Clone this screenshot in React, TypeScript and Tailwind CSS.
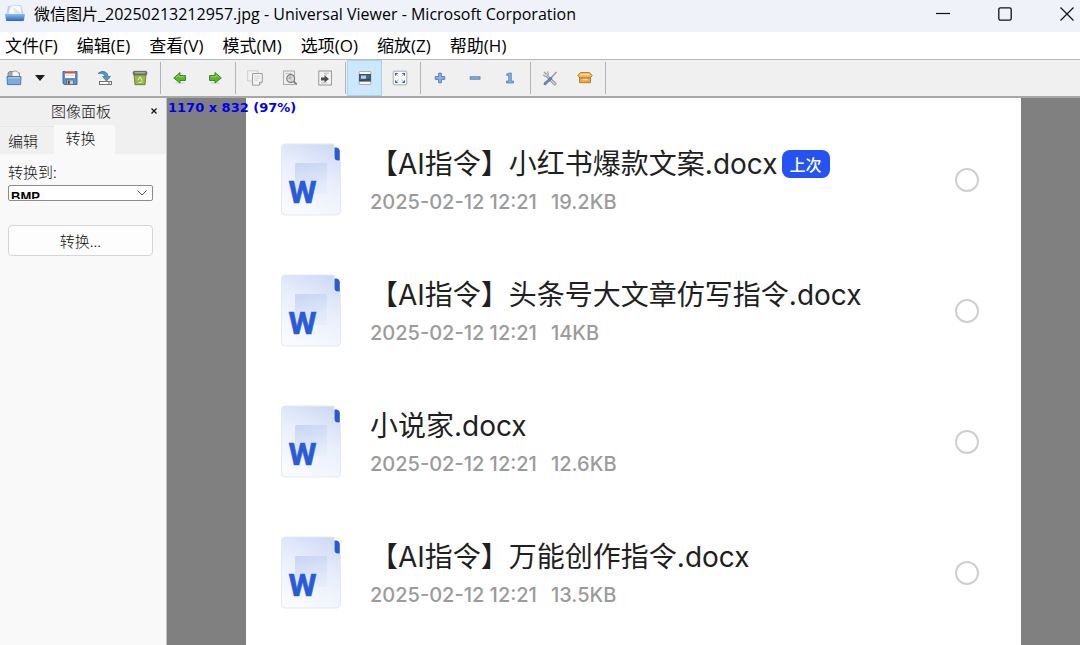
import React, { useState } from 'react';

interface DocItem {
  name: string;
  date: string;
  size: string;
  recent?: boolean;
}

const MENUS = ['文件(F)', '编辑(E)', '查看(V)', '模式(M)', '选项(O)', '缩放(Z)', '帮助(H)'];

const DOCS: DocItem[] = [
  { name: '【AI指令】小红书爆款文案.docx', date: '2025-02-12 12:21', size: '19.2KB', recent: true },
  { name: '【AI指令】头条号大文章仿写指令.docx', date: '2025-02-12 12:21', size: '14KB' },
  { name: '小说家.docx', date: '2025-02-12 12:21', size: '12.6KB' },
  { name: '【AI指令】万能创作指令.docx', date: '2025-02-12 12:21', size: '13.5KB' },
];

const Icon: React.FC<{ children: React.ReactNode }> = ({ children }) => (
  <svg viewBox="0 0 16 16" className="w-4 h-4" fill="none" aria-hidden="true">
    {children}
  </svg>
);

const AppIcon = () => (
  <svg viewBox="0 0 22 18" className="w-[22px] h-[18px]" fill="none" aria-hidden="true">
    <defs>
      <linearGradient id="tray" x1="0" y1="0" x2="0" y2="1">
        <stop offset="0" stopColor="#8fbcf0" />
        <stop offset="1" stopColor="#2866bd" />
      </linearGradient>
    </defs>
    <path d="M4 2 L17 1 L20 12 H2 Z" fill="#b5d2f3" />
    <path d="M6 3 L9 1 L17 2 L18 11 H4 Z" fill="#f7f8fa" stroke="#c9d3df" strokeWidth=".7" />
    <path d="M9 3 L16 8 L17 11 L11 11 Z" fill="#e2e6ec" />
    <path d="M1 10 H21 L20 16 Q20 17 19 17 H3 Q2 17 2 16 Z" fill="url(#tray)" />
  </svg>
);

const FolderIcon = () => (
  <Icon>
    <path d="M2 14 V3 L3.5 1.5 H7 L8 3 H13.5 V14 Z" fill="#a9a9a9" stroke="#777" strokeWidth=".8" />
    <path d="M6 7 V2 Q9 .4 11 1.2 L13.4 4 V8 Z" fill="#f6f6f6" stroke="#8a8a8a" strokeWidth=".8" />
    <path d="M1 6.5 H15 L14.6 14.6 H1.4 Z" fill="#7fabdc" stroke="#3f74b4" strokeWidth=".9" />
    <path d="M2 7.8 H14" stroke="#b7d0ed" />
  </Icon>
);

const SaveIcon = () => (
  <Icon>
    <path d="M1 1.5 H15 V14.5 H2.2 L1 13.3 Z" fill="#5f8fce" stroke="#3c619b" strokeWidth=".9" />
    <rect x="3" y="1.5" width="10" height="6.5" fill="#fafafa" />
    <rect x="3" y="1.5" width="10" height="2" fill="#dd4b3c" />
    <path d="M4 5.3 H12" stroke="#ccc" strokeWidth=".7" />
    <rect x="4.5" y="10" width="7" height="4.5" fill="#c9cbd0" stroke="#555d6b" strokeWidth=".7" />
    <rect x="5.8" y="10.8" width="2" height="3" fill="#39465c" />
  </Icon>
);

const ExportIcon = () => (
  <Icon>
    <path d="M1 3.5 Q4.5 0 8.5 2 Q11 3.5 11 6.5 H13.5 L9.5 11 L5.5 6.5 H8 Q7.8 4 5 3.5 Q3 3.2 1 3.5Z" fill="#4d9cc4" stroke="#2d7195" strokeWidth=".7" />
    <rect x="2.5" y="11.5" width="12" height="3" fill="#fff" stroke="#666" strokeWidth=".9" />
    <path d="M12 12 V14" stroke="#666" />
  </Icon>
);

const TrashIcon = () => (
  <Icon>
    <path d="M2 4.5 H14 L13 14.7 H3 Z" fill="#9cb74a" stroke="#5c6d31" strokeWidth=".8" />
    <rect x="1.2" y="1.3" width="13.6" height="3.6" rx="1" fill="#74786a" stroke="#55584c" strokeWidth=".7" />
    <path d="M3 2.8 H13" stroke="#bfc2b4" />
    <path d="M6 10 L8 7 L10 10 M10.5 10.5 L9 12.5 H6.5" stroke="#dbe9a4" strokeWidth="1.2" />
  </Icon>
);

const ArrowIcon: React.FC<{ right?: boolean }> = ({ right }) => (
  <Icon>
    <ellipse cx="8" cy="13" rx="5" ry="1" fill="#dadada" />
    <path
      d={right ? 'M2.5 5.5 H8 V2.5 L14.3 8 L8 13 V10.5 H2.5 Z' : 'M13.5 5.5 H8 V2.5 L1.7 8 L8 13 V10.5 H13.5 Z'}
      fill="#59b82a"
      stroke="#36801a"
      strokeWidth=".9"
      strokeLinejoin="round"
    />
    <path d={right ? 'M3.5 6.8 H9 V5 L12 7.7' : 'M12.5 6.8 H7 V5 L4 7.7'} stroke="#9fdd6c" strokeWidth=".8" />
  </Icon>
);

const CopyIcon = () => (
  <Icon>
    <path d="M.7 .8 H11 V11 H.7 Z" fill="#f3f3f3" stroke="#c0c0c0" strokeWidth=".8" />
    <path d="M5.5 3.5 H15.3 V12 L12.5 15.2 H5.5 Z" fill="#f5f5f5" stroke="#929292" strokeWidth=".9" />
    <path d="M12.5 15 V12.2 H15.2" stroke="#929292" fill="#ddd" strokeWidth=".8" />
    <path d="M7.5 6.3 H13 M7.5 8.3 H13 M7.5 10.3 H11" stroke="#ccc" strokeWidth=".8" />
  </Icon>
);

const PreviewIcon = () => (
  <Icon>
    <rect x="1.5" y="1" width="11" height="13.5" fill="#efefef" stroke="#a5a5a5" strokeWidth=".9" />
    <path d="M3.5 3.5 H10" stroke="#b5b5b5" strokeWidth=".8" />
    <circle cx="8.7" cy="8.5" r="3.9" fill="#d8dadb" stroke="#777" strokeWidth="1.1" />
    <circle cx="8" cy="7.8" r="1.6" fill="#a9adaf" />
    <path d="M11.5 11.3 L14.8 14.5" stroke="#858585" strokeWidth="1.8" />
  </Icon>
);

const PageIcon = () => (
  <Icon>
    <rect x="1.8" y="1" width="12.6" height="14" fill="#f5f5f5" stroke="#8d8d8d" strokeWidth=".9" />
    <path d="M7 3.2 H12 M7 5 H10 M4 12.8 H10" stroke="#b3b3b3" strokeWidth=".9" />
    <path d="M4 7.6 H7.5 V5.2 L12 9 L7.5 12.4 V10.4 H4 Z" fill="#4e4e4e" />
  </Icon>
);

const FitIcon = () => (
  <Icon>
    <rect x="2.2" y="1.5" width="11.6" height="13" rx=".7" fill="#f8f8f3" stroke="#a2a59c" strokeWidth=".9" />
    <rect x="2.6" y="4.5" width="10.8" height="6.6" fill="#41688f" stroke="#3d464e" strokeWidth=".9" />
    <rect x="4" y="5.6" width="5" height="3.2" fill="#b7cfde" />
    <path d="M3.2 10.4 L12.8 9.4" stroke="#303b45" />
  </Icon>
);

const FullscreenIcon = () => (
  <Icon>
    <rect x="1.2" y="1.2" width="13.6" height="13.6" rx=".8" fill="#fafafa" stroke="#a6a6a6" strokeWidth=".9" />
    <path d="M3 3 H6.2 L3 6.2Z M13 3 H9.8 L13 6.2Z M3 13 H6.2 L3 9.8Z M13 13 H9.8 L13 9.8Z" fill="#3b64a0" />
    <path d="M4 4 L6.3 6.3 M12 4 L9.7 6.3 M4 12 L6.3 9.7 M12 12 L9.7 9.7" stroke="#8aa5cb" strokeWidth=".8" />
  </Icon>
);

const PlusIcon = () => (
  <Icon>
    <path d="M6.6 3.2 H9.4 V6.6 H12.8 V9.4 H9.4 V12.8 H6.6 V9.4 H3.2 V6.6 H6.6 Z" fill="#8bb0dd" stroke="#4c7fc0" strokeWidth=".9" />
  </Icon>
);

const MinusIcon = () => (
  <Icon>
    <rect x="3.2" y="6.8" width="9.8" height="2.4" fill="#8bb0dd" stroke="#4c7fc0" strokeWidth=".9" />
  </Icon>
);

const ActualSizeIcon = () => (
  <Icon>
    <path d="M4.5 4.2 L7 3 H9.3 V11 H11.5 V13 H4.5 V11 H6.7 V5.3 H4.5 Z" fill="#8bb0dd" stroke="#4c7fc0" strokeWidth=".8" />
  </Icon>
);

const ToolsIcon = () => (
  <Icon>
    <path d="M2 2 L4.5 4.5 M5.5 1.5 Q6.8 4 5.7 5.6 L13.5 13 Q14.7 14.2 13.3 14.8 Q12.5 15 11.8 14.3 L4.4 6.6 Q2.3 6.8 1.3 4.8" stroke="#9a9fa2" strokeWidth="1.2" fill="#e3e5e6" />
    <path d="M14.5 2 L9.2 7.8" stroke="#9b9fa2" strokeWidth="1.6" />
    <path d="M8.8 7.2 L2 13.2 Q1.5 15 3.5 14.8 L10 8.5 Z" fill="#6290c9" stroke="#3a669f" strokeWidth=".8" />
  </Icon>
);

const BoxIcon = () => (
  <Icon>
    <path d="M3.5 2.5 H12.5 L15.2 5.5 L13 8 H3 L.8 5.5 Z" fill="#f0b45b" stroke="#bd741c" strokeWidth=".9" strokeLinejoin="round" />
    <path d="M3.8 3.8 H12.2 L12.8 5.2 H3.2 Z" fill="#fbdca8" />
    <path d="M2.5 8 H13.5 V12.7 H2.5 Z" fill="#eda747" stroke="#bd741c" strokeWidth=".9" strokeLinejoin="round" />
    <path d="M5.5 9.5 H10.5" stroke="#fbdca8" strokeWidth="1.4" />
  </Icon>
);

const TOOL_GROUPS = [
  [
    { label: '保存', icon: <SaveIcon /> },
    { label: '另存为', icon: <ExportIcon /> },
    { label: '删除', icon: <TrashIcon /> },
  ],
  [
    { label: '上一个', icon: <ArrowIcon /> },
    { label: '下一个', icon: <ArrowIcon right /> },
  ],
  [
    { label: '复制', icon: <CopyIcon /> },
    { label: '打印预览', icon: <PreviewIcon /> },
    { label: '转到', icon: <PageIcon /> },
  ],
  [
    { label: '适应窗口', icon: <FitIcon />, active: true },
    { label: '全屏', icon: <FullscreenIcon /> },
  ],
  [
    { label: '放大', icon: <PlusIcon /> },
    { label: '缩小', icon: <MinusIcon /> },
    { label: '原始大小', icon: <ActualSizeIcon /> },
  ],
  [
    { label: '选项', icon: <ToolsIcon /> },
    { label: '插件', icon: <BoxIcon /> },
  ],
];

const WordIcon: React.FC<{ id: string }> = ({ id }) => (
  <svg viewBox="0 0 62 74" className="w-[62px] h-[74px] shrink-0" fill="none" aria-hidden="true">
    <defs>
      <linearGradient id={`${id}-page`} x1=".8" y1="0" x2=".4" y2="1">
        <stop offset="0" stopColor="#cdd9f6" />
        <stop offset=".45" stopColor="#e8eefb" />
        <stop offset="1" stopColor="#f8fafe" />
      </linearGradient>
      <linearGradient id={`${id}-sq`} x1=".3" y1="0" x2=".6" y2="1">
        <stop offset="0" stopColor="#c3d1f2" />
        <stop offset="1" stopColor="#e6edfb" />
      </linearGradient>
    </defs>
    <path d="M5 1 H54 V14 Q54 18 58 18 H60.5 V67.5 Q60.5 72 56 72 H5 Q1.5 72 1.5 68.5 V4.5 Q1.5 1 5 1 Z" fill={`url(#${id}-page)`} stroke="#e4e9f5" />
    <path d="M54.5 4.5 H56.5 Q59.8 5 59.8 8.5 V17.5 H58 Q54.5 17.5 54.5 14 Z" fill="#2b5bd3" />
    <rect x="15" y="20" width="32" height="31" rx="1" fill={`url(#${id}-sq)`} opacity=".8" />
    <text x="22.5" y="60" textAnchor="middle" className="text-[32px] font-bold font-['Roboto',sans-serif]" fill="#2a5bd7" stroke="#2a5bd7" strokeWidth=".6">W</text>
  </svg>
);

const TitleBar = () => (
  <header className="flex items-start h-8 shrink-0 bg-[#eff3f9] pl-1 pt-1 text-black">
    <AppIcon />
    <h1 className="ml-2 grow text-base leading-5 font-['Open_Sans','Noto_Sans_CJK_SC',sans-serif] whitespace-nowrap">
      微信图片_20250213212957.jpg - Universal Viewer - Microsoft Corporation
    </h1>
    <button aria-label="最小化" className="w-[62px] h-5 flex items-center justify-center">
      <svg viewBox="0 0 14 14" className="w-3.5 h-3.5" stroke="#111" strokeWidth="1.2"><path d="M0 6.5 H14" /></svg>
    </button>
    <button aria-label="最大化" className="w-[62px] h-5 flex items-center justify-center">
      <svg viewBox="0 0 14 14" className="w-3.5 h-3.5" stroke="#111" strokeWidth="1.3" fill="none"><rect x=".8" y=".8" width="12.4" height="12.4" rx="1.6" /></svg>
    </button>
    <button aria-label="关闭" className="w-[62px] -mr-[18px] h-5 flex items-center justify-center">
      <svg viewBox="0 0 14 14" className="w-3.5 h-3.5" stroke="#111" strokeWidth="1.2"><path d="M.5 .5 L13.5 13.5 M13.5 .5 L.5 13.5" /></svg>
    </button>
  </header>
);

const Toolbar = () => (
  <div role="toolbar" className="flex items-center h-[39px] shrink-0 bg-[#f0f0f0] border-t border-[#b9b9b9] border-b-2 border-b-[#a8a8a8]">
    <button aria-label="打开" className="w-7 h-9 flex items-center justify-center"><FolderIcon /></button>
    <button aria-label="最近的文件" className="w-6 h-9 flex items-center justify-center">
      <svg viewBox="0 0 10 6" className="w-2.5 h-1.5"><path d="M0 0 H10 L5 6 Z" fill="#1c1c1c" /></svg>
    </button>
    {TOOL_GROUPS.map((group, i) => (
      <div key={i} className="flex items-center">
        {group.map(tool => (
          <button
            key={tool.label}
            aria-label={tool.label}
            className={`w-[35px] h-9 flex items-center justify-center ${'active' in tool ? 'bg-[#cce8ff] ring-1 ring-inset ring-[#a6d4f7]' : ''}`}
          >
            {tool.icon}
          </button>
        ))}
        <div className="w-px h-8 ml-[3px] mr-px bg-[#b4b4b4]"></div>
      </div>
    ))}
  </div>
);

const ImagePanel = () => {
  const [format, setFormat] = useState('BMP');

  return (
    <aside className="w-[167px] shrink-0 bg-[#f9f9f9] border-r border-[#c4c4c4] text-[15px] leading-5 text-[#111] font-['Noto_Sans_CJK_SC',sans-serif] font-light">
      <div className="flex items-center h-[27px] bg-[#f0f0f0] pl-4 pr-1 pb-0.5">
        <h2 className="grow text-center">图像面板</h2>
        <button aria-label="关闭面板" className="w-4 h-4 flex items-center justify-center">
          <svg viewBox="0 0 6 6" className="w-1.5 h-1.5" stroke="#111" strokeWidth="1.2"><path d="M.5 .5 L5.5 5.5 M5.5 .5 L.5 5.5" /></svg>
        </button>
      </div>
      <div role="tablist" className="flex h-[29px] bg-[#f0f0f0]">
        <button role="tab" aria-selected="false" className="w-[54px] pr-2 border-t border-[#e6e6e6] mt-px">编辑</button>
        <button role="tab" aria-selected="true" className="w-[61px] pr-2 pb-1 bg-[#f9f9f9]">转换</button>
      </div>
      <div className="flex flex-col pl-2 pr-[13px] pt-2">
        <label htmlFor="format">转换到:</label>
        <div className="relative mt-[3px]">
          {/* the box is lower than its text line, so the letters are cut off */}
          <select
            id="format"
            value={format}
            onChange={e => setFormat(e.target.value)}
            className="block w-full h-4 pt-[3px] pb-px pl-0.5 appearance-none bg-white border border-[#8c8c8c] rounded-xs overflow-hidden text-[13px] leading-4 font-bold text-black font-['Liberation_Sans',sans-serif]"
          >
            <option>BMP</option>
            <option>JPEG</option>
            <option>PNG</option>
          </select>
          <svg viewBox="0 0 10 6" className="absolute right-1.5 top-[5px] w-2.5 h-1.5 pointer-events-none" stroke="#555" fill="none"><path d="M.5 .5 L5 5 L9.5 .5" /></svg>
        </div>
        <button className="mt-6 h-[31px] bg-[#fdfdfd] border border-[#d6d6d6] rounded-sm">转换...</button>
      </div>
    </aside>
  );
};

const DocRow: React.FC<{ doc: DocItem; index: number }> = ({ doc, index }) => (
  <li className="flex items-center h-[131px] pl-[34px] pr-[42px]">
    <WordIcon id={`doc${index}`} />
    <div className="grow ml-7 pt-1">
      <div className="flex items-center gap-1">
        <label htmlFor={`pick-${index}`} className="text-[28px] leading-9 text-[#1f1f1f] font-['Inter','Noto_Sans_CJK_SC',sans-serif]">{doc.name}</label>
        {doc.recent && (
          <span className="flex items-center h-7 px-2 rounded-lg bg-[#2553f3] text-white text-base font-medium font-['Noto_Sans_CJK_SC',sans-serif]">上次</span>
        )}
      </div>
      <p className="mt-1 flex gap-3.5 text-xl leading-8 font-medium text-[#9b9b9b] font-['Inter',sans-serif]">
        <span>{doc.date}</span>
        <span>{doc.size}</span>
      </p>
    </div>
    <input id={`pick-${index}`} type="radio" name="doc" className="appearance-none w-6 h-6 rounded-full border-2 border-[#cfcfcf] checked:border-[#2553f3] checked:border-8" />
  </li>
);

export default function App() {
  return (
    <div className="flex flex-col h-screen overflow-hidden bg-white">
      <TitleBar />
      <nav className="flex items-center gap-[19px] h-[27px] shrink-0 pl-[5px] text-[17px] leading-6 text-black font-['Open_Sans','Noto_Sans_CJK_SC',sans-serif]">
        {MENUS.map(menu => (
          <button key={menu} className="whitespace-nowrap">{menu}</button>
        ))}
      </nav>
      <Toolbar />
      <div className="flex grow min-h-0">
        <ImagePanel />
        <main className="relative grow overflow-hidden bg-[#808080] pl-[79px] pr-[59px]">
          <ul className="min-h-full bg-white pt-4">
            {DOCS.map((doc, i) => (
              <DocRow key={doc.name} doc={doc} index={i} />
            ))}
          </ul>
          <span className="absolute left-px top-0 text-[13px] leading-5 font-bold text-[#0000f0] font-['DejaVu_Sans',sans-serif]">1170 x 832 (97%)</span>
        </main>
      </div>
    </div>
  );
}
